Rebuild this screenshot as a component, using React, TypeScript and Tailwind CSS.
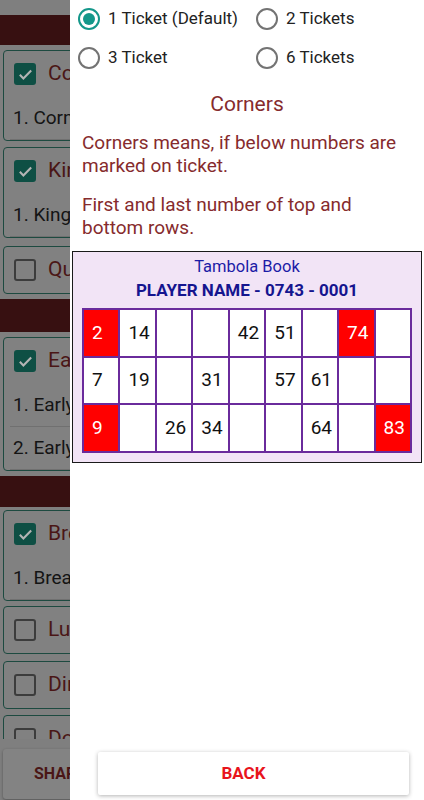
import React from 'react'

const font = { fontFamily: 'Roboto, "Noto Sans", sans-serif' }

type Cell = { n?: number; hit?: boolean }

const rows: Cell[][] = [
  [{ n: 2, hit: true }, { n: 14 }, {}, {}, { n: 42 }, { n: 51 }, {}, { n: 74, hit: true }, {}],
  [{ n: 7 }, { n: 19 }, {}, { n: 31 }, {}, { n: 57 }, { n: 61 }, {}, {}],
  [{ n: 9, hit: true }, {}, { n: 26 }, { n: 34 }, {}, {}, { n: 64 }, {}, { n: 83, hit: true }],
]

function Check({ checked }: { checked: boolean }) {
  if (!checked) {
    return <div className="w-[22px] h-[22px] rounded-[3px] border-[2px] border-[#3c3c3c] shrink-0" />
  }
  return (
    <div className="w-[22px] h-[22px] rounded-[3px] bg-[#0e4f44] shrink-0 flex items-center justify-center">
      <svg width="17" height="17" viewBox="0 0 24 24" fill="none">
        <path d="M4 12.5l5 5L20 6.5" stroke="#b4b4b4" strokeWidth="3" />
      </svg>
    </div>
  )
}

function BgCard({ title, checked, items = [], className = '' }: { title: string; checked: boolean; items?: string[]; className?: string }) {
  return (
    <div className={`mx-[3px] border border-[#1d4a40] rounded-[4px] bg-[#818181] ${className}`}>
      <div className="h-[46px] flex items-center gap-[12px] pl-[10px]">
        <Check checked={checked} />
        <span className="text-[21px] text-[#4a1616]">{title}</span>
      </div>
      {items.map(it => (
        <div key={it} className="h-[43px] mx-[6px] flex items-center pl-[3px] border-b border-[#707070] text-[19px] text-[#141414]">
          {it}
        </div>
      ))}
    </div>
  )
}

function Band({ className = '' }: { className?: string }) {
  return <div className={`bg-[#371011] ${className}`} />
}

function Radio({ label, on }: { label: string; on?: boolean }) {
  return (
    <div className="flex items-center gap-[8px]">
      {on ? (
        <div className="w-[22px] h-[22px] rounded-full border-[2px] border-[#14978a] flex items-center justify-center">
          <div className="w-[12px] h-[12px] rounded-full bg-[#14978a]" />
        </div>
      ) : (
        <div className="w-[22px] h-[22px] rounded-full border-[2px] border-[#737373]" />
      )}
      <span className="text-[17px] text-[#222]">{label}</span>
    </div>
  )
}

export default function App() {
  return (
    <div className="flex w-[424px] h-[800px] overflow-hidden bg-white" style={font}>
      <div className="w-[70px] shrink-0 overflow-hidden bg-[#7f7f7f] flex flex-col">
        <div className="w-[420px] flex flex-col h-full">
          <div className="h-[15px]" />
          <Band className="h-[30px]" />
          <BgCard className="mt-[5px]" title="Corners" checked items={['1. Corners']} />
          <BgCard className="mt-[6px]" title="King Line" checked items={['1. King Line']} />
          <BgCard className="mt-[8px]" title="Queen Line" checked={false} />
          <Band className="h-[33px] mt-[5px]" />
          <BgCard className="mt-[5px]" title="Early Five" checked items={['1. Early Five', '2. Early Seven']} />
          <Band className="h-[31px] mt-[5px]" />
          <BgCard className="mt-[3px]" title="Breakfast" checked items={['1. Breakfast']} />
          <BgCard className="mt-[5px]" title="Lunch" checked={false} />
          <BgCard className="mt-[7px]" title="Dinner" checked={false} />
          <div className="h-[24px] mt-[6px] overflow-hidden">
            <BgCard title="Double" checked={false} />
          </div>
          <div className="flex-1 flex items-start pt-[10px] px-[3px] bg-[#7f7f7f]">
            <div className="h-[50px] w-[200px] bg-[#838383] rounded-[3px] shadow-[0_1px_3px_rgba(0,0,0,0.35)] flex items-center pl-[31px] text-[16px] font-bold text-[#4a1616]">
              SHARE
            </div>
          </div>
        </div>
      </div>

      <div className="w-[354px] shrink-0 flex flex-col bg-white">
        <div className="grid grid-cols-[178px_1fr] pl-[8px] mt-[-1px]">
          <div className="h-[39px] flex items-center"><Radio label="1 Ticket (Default)" on /></div>
          <div className="h-[39px] flex items-center"><Radio label="2 Tickets" /></div>
          <div className="h-[39px] flex items-center"><Radio label="3 Ticket" /></div>
          <div className="h-[39px] flex items-center"><Radio label="6 Tickets" /></div>
        </div>

        <div className="mt-[15px] text-center text-[21px] leading-[25px] text-[#862b2d]">Corners</div>

        <div className="px-[12px] text-[19px] leading-[23px] text-[#862b2d]">
          <p className="mt-[14px]">Corners means, if below numbers are marked on ticket.</p>
          <p className="mt-[16px]">First and last number of top and bottom rows.</p>
        </div>

        <div className="mx-[2px] mt-[12px] border-[1.5px] border-[#1a1a1a] bg-[#f2e4f6] px-[9px] pt-[4px] pb-[9px]">
          <div className="text-center text-[16.5px] leading-[21px] text-[#1c1ca6]">Tambola Book</div>
          <div className="text-center text-[17px] leading-[22px] font-bold text-[#15158f] mt-[2px]">PLAYER NAME - 0743 - 0001</div>
          <div className="mt-[7px] grid grid-cols-9 gap-[2px] p-[2px] bg-[#6a2b9c]">
            {rows.flat().map((c, i) => (
              <div
                key={i}
                className={`h-[45.7px] flex items-center pl-[8px] text-[19px] ${c.hit ? 'bg-[#ff0000] text-white' : 'bg-white text-[#111]'}`}
              >
                {c.n ?? ''}
              </div>
            ))}
          </div>
        </div>

        <div className="mt-auto mb-[5px] ml-[28px] mr-[15px] h-[43px] bg-white rounded-[2px] shadow-[0_1px_4px_rgba(0,0,0,0.3)] flex items-center justify-center pr-[20px]">
          <span className="text-[17px] font-bold text-[#e8141c]">BACK</span>
        </div>
      </div>
    </div>
  )
}
